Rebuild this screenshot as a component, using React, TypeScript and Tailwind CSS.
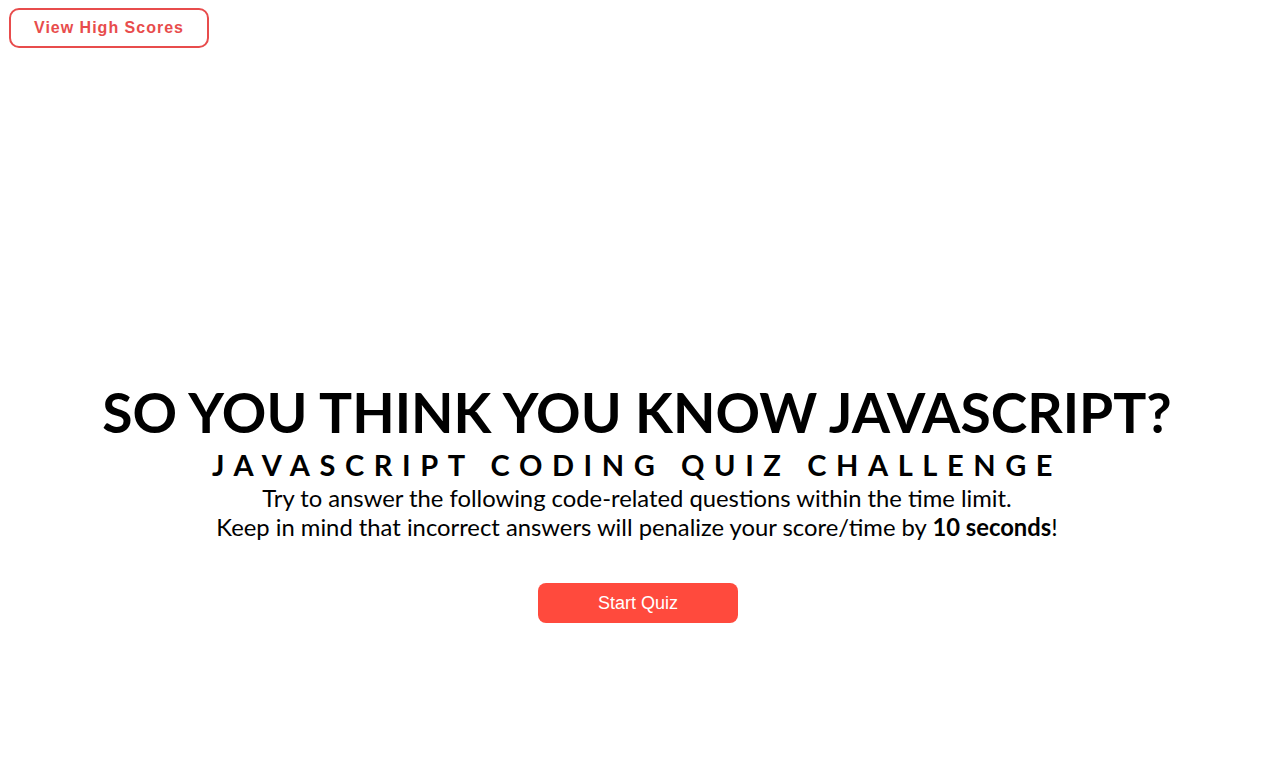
import React from 'react'

const App = () => {
  return (
    <div className="min-h-screen bg-white">
      <header className="px-[9px] pt-[8px]">
        <button className="h-[40px] w-[200px] rounded-[10px] border-2 border-[#e84c4c] text-[16px] font-bold tracking-[1px] text-[#e84c4c] [font-family:'Liberation_Sans',Arial,sans-serif]">
          View High Scores
        </button>
      </header>
      <main className="flex flex-col items-center pt-[336px] text-center text-black [font-family:Lato,'Noto_Sans',sans-serif]">
        <h1 className="text-[55.2px] font-bold leading-[56px]">SO YOU THINK YOU KNOW JAVASCRIPT?</h1>
        <h2 className="mt-[8px] text-[29px] font-bold leading-[34px] tracking-[9.6px]">JAVASCRIPT CODING QUIZ CHALLENGE</h2>
        <p className="mt-[2px] text-[23.8px] leading-[29px]">
          Try to answer the following code-related questions within the time limit.
          <br />
          Keep in mind that incorrect answers will penalize your score/time by <strong>10 seconds</strong>!
        </p>
        <button className="ml-[2px] mt-[41px] h-[40px] w-[200px] rounded-[8px] bg-[#ff4a3d] text-[18px] text-white [font-family:'Liberation_Sans',Arial,sans-serif]">
          Start Quiz
        </button>
      </main>
    </div>
  )
}

export default App
